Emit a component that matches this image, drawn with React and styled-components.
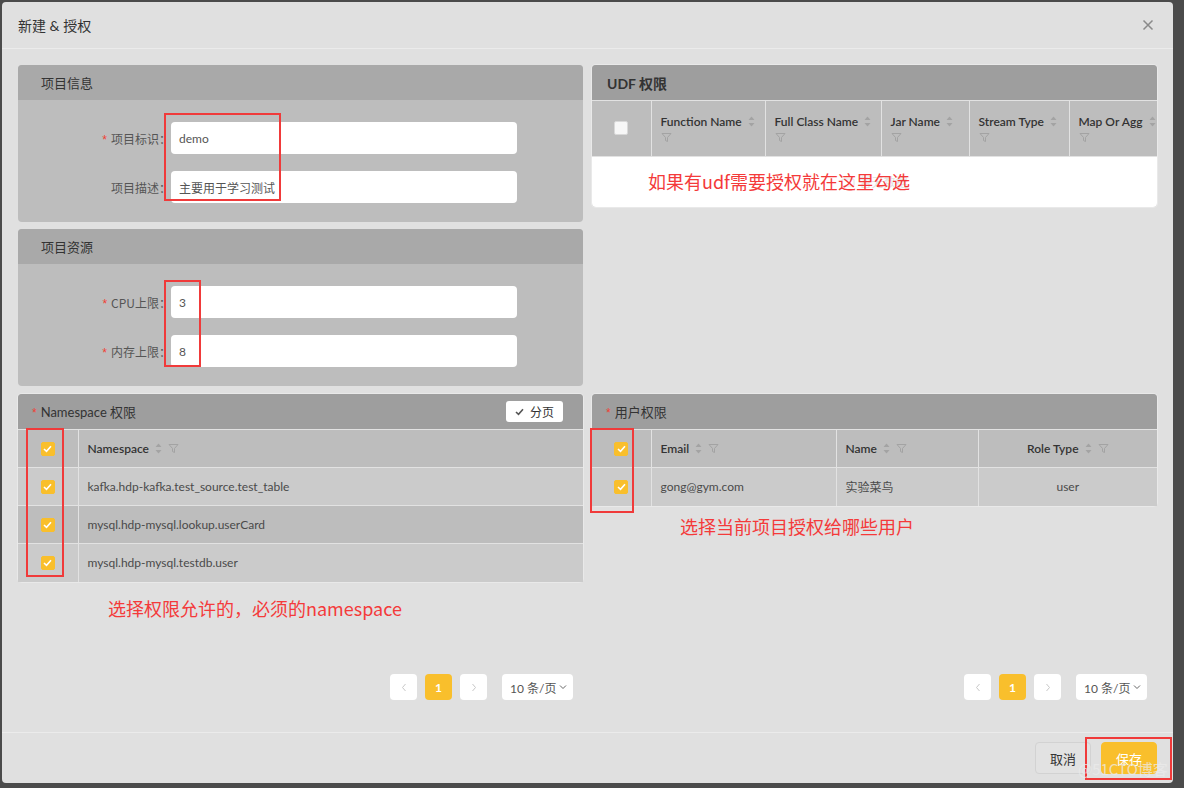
import React from 'react';
import styled, { createGlobalStyle } from 'styled-components';

const GlobalStyle = createGlobalStyle`
  html, body {
    margin: 0;
    padding: 0;
    background: #4b4b4b;
  }
  body {
    font-family: Lato, "Noto Sans CJK SC", sans-serif;
    font-size: 12px;
    color: #444;
  }
`;

const Screen = styled.div`
  position: relative;
  width: 1184px;
  height: 788px;
  padding: 2px 0 0 2px;
  box-sizing: border-box;
  overflow: hidden;
`;

const Dialog = styled.div`
  width: 1171px;
  height: 781px;
  background: #e0e0e0;
  border-radius: 4px;
  display: flex;
  flex-direction: column;
`;

const DialogHeader = styled.div`
  height: 46px;
  flex-shrink: 0;
  display: flex;
  align-items: center;
  justify-content: space-between;
  padding: 0 19px 0 16px;
  border-bottom: 1px solid #ebebeb;
  font-size: 14px;
  color: #333;
`;

const Close = styled.span`
  width: 12px;
  height: 12px;
  display: flex;
  color: #8a8a8a;
`;

const Body = styled.div`
  flex: 1;
  padding: 16px 16px 32px;
  display: grid;
  grid-template-columns: 565px 565px;
  grid-template-rows: auto auto 1fr;
  column-gap: 9px;
  row-gap: 8px;
`;

const Stack = styled.div`
  display: flex;
  flex-direction: column;
  gap: 7px;
  align-self: start;
`;

const Cell = styled.div`
  align-self: start;
`;

const Card = styled.div`
  position: relative;
  background: #bdbdbd;
  border-radius: 4px;
  box-shadow: ${p => (p.$edge ? '0 0 0 1px #e9e9e9' : 'none')};
`;

const CardHeader = styled.div`
  height: 35px;
  display: flex;
  align-items: center;
  justify-content: space-between;
  padding: 0 20px 0 ${p => p.$indent}px;
  background: ${p => p.$bg};
  border-radius: 4px 4px 0 0;
  font-size: ${p => (p.$bold ? 14 : 13)}px;
  font-weight: ${p => (p.$bold ? 700 : 400)};
  color: #333;
`;

const Star = styled.span`
  color: #f04134;
  font-size: 12px;
  margin-right: 4px;
  font-family: "Liberation Sans", sans-serif;
`;

const PageToggle = styled.span`
  display: flex;
  align-items: center;
  gap: 6px;
  height: 21px;
  padding: 0 9px;
  background: #fff;
  border-radius: 3px;
  font-size: 12px;
  color: #333;
`;

const FormBody = styled.div`
  display: flex;
  flex-direction: column;
  gap: 17px;
  padding: 22px 0 19px;
`;

const FormRow = styled.div`
  display: flex;
  align-items: center;
`;

const Label = styled.label`
  width: 153px;
  text-align: right;
  color: #555;
  font-size: 12px;
  font-family: "Noto Sans CJK SC", sans-serif;
`;

const Input = styled.div`
  width: 346px;
  height: 32px;
  box-sizing: border-box;
  display: flex;
  align-items: center;
  padding: 0 8px;
  background: #fff;
  border-radius: 4px;
  color: #555;
  font-size: 12px;
`;

const Mark = styled.div`
  position: absolute;
  border: 2px solid #f03a3a;
  pointer-events: none;
  left: ${p => p.$x}px;
  top: ${p => p.$y}px;
  width: ${p => p.$w}px;
  height: ${p => p.$h}px;
  box-sizing: border-box;
`;

const Table = styled.table`
  width: 100%;
  border-collapse: collapse;
  table-layout: fixed;
`;

const Th = styled.th`
  height: ${p => p.$h}px;
  padding: 0 9px;
  background: #bdbdbd;
  border-right: 1px solid #e2e2e2;
  border-top: 1px solid #e2e2e2;
  font-weight: 600;
  font-size: 12px;
  color: #333;
  text-align: ${p => p.$align || 'left'};
  vertical-align: middle;
  box-sizing: border-box;
  overflow: hidden;
  &:last-child { border-right: none; }
`;

const Td = styled.td`
  height: 38px;
  padding: 0 9px;
  background: ${p => (p.$alt ? '#bdbdbd' : '#cbcbcb')};
  border-right: 1px solid #e2e2e2;
  border-top: 1px solid #e2e2e2;
  color: #4a4a4a;
  font-size: 12px;
  text-align: ${p => p.$align || 'left'};
  box-sizing: border-box;
  &:last-child { border-right: none; }
`;

const HeadLine = styled.span`
  display: inline-flex;
  align-items: center;
  gap: 6px;
  white-space: nowrap;
`;

const IconLine = styled.div`
  display: flex;
  margin-top: 3px;
`;

const Box = styled.span`
  display: inline-flex;
  align-items: center;
  justify-content: center;
  width: 14px;
  height: 14px;
  border-radius: 2px;
  box-sizing: border-box;
  background: ${p => (p.$on ? '#f9bf2c' : '#f7f7f7')};
  border: 1px solid ${p => (p.$on ? '#f9bf2c' : '#d9d9d9')};
  vertical-align: middle;
`;

const CheckCell = styled.div`
  display: flex;
  justify-content: center;
`;

const Empty = styled.div`
  position: relative;
  height: 50px;
  background: #fff;
  border-top: 1px solid #e2e2e2;
  border-radius: 0 0 4px 4px;
  display: flex;
  align-items: center;
  justify-content: center;
  gap: 4px;
  color: #e2e2e2;
  font-size: 12px;
`;

const Note = styled.div`
  color: #f43a3a;
  font-size: 18px;
  font-family: "Noto Sans CJK SC", sans-serif;
  line-height: 22px;
  white-space: nowrap;
  padding-left: ${p => p.$indent}px;
  margin-top: ${p => p.$top}px;
`;

const FloatNote = styled(Note)`
  position: absolute;
  left: 56px;
  top: 13px;
  margin: 0;
  padding: 0;
`;

const Pager = styled.div`
  align-self: end;
  justify-self: end;
  margin-right: 10px;
  display: flex;
  align-items: center;
  gap: 8px;
`;

const PageItem = styled.span`
  width: 27px;
  height: 26px;
  display: flex;
  align-items: center;
  justify-content: center;
  border-radius: 4px;
  background: ${p => (p.$active ? '#f9bf2c' : '#fff')};
  color: ${p => (p.$active ? '#fff' : '#c8c8c8')};
  font-weight: ${p => (p.$active ? 700 : 400)};
  font-size: 12px;
`;

const SizeSelect = styled.span`
  margin-left: 7px;
  width: 71px;
  height: 26px;
  box-sizing: border-box;
  padding-left: 8px;
  display: flex;
  align-items: center;
  gap: 3px;
  background: #fff;
  border-radius: 4px;
  color: #555;
  font-size: 12px;
`;

const Footer = styled.div`
  height: 51px;
  flex-shrink: 0;
  box-sizing: border-box;
  border-top: 1px solid #ebebeb;
  display: flex;
  align-items: center;
  justify-content: flex-end;
  gap: 10px;
  padding: 0 16px;
`;

const Button = styled.span`
  position: relative;
  height: 32px;
  padding: 0 14px;
  box-sizing: border-box;
  display: flex;
  align-items: center;
  border-radius: 4px;
  font-size: 13px;
  background: ${p => (p.$primary ? '#f9bf2c' : '#e2e2e2')};
  border: 1px solid ${p => (p.$primary ? '#f9bf2c' : '#d2d2d2')};
  color: ${p => (p.$primary ? '#fff' : '#333')};
`;

const SaveMark = styled.span`
  position: absolute;
  top: -6px;
  left: -17px;
  right: -16px;
  bottom: -7px;
  border: 2px solid #f03a3a;
`;

const Watermark = styled.div`
  position: absolute;
  left: 1078px;
  top: 758px;
  font-size: 15px;
  color: rgba(235, 235, 235, 0.75);
  font-family: "Noto Sans CJK SC", sans-serif;
  white-space: nowrap;
`;

const Caret = () => (
  <svg width="7" height="11" viewBox="0 0 7 11">
    <path d="M3.5 0.5 L6.5 4 H0.5 Z M0.5 7 H6.5 L3.5 10.5 Z" fill="#a3a3a3" />
  </svg>
);

const Funnel = () => (
  <svg width="11" height="11" viewBox="0 0 11 11">
    <path d="M1 1.5 H10 L6.5 5.5 V9.5 L4.5 8.5 V5.5 Z" fill="none" stroke="#a3a3a3" strokeWidth="1" strokeLinejoin="round" />
  </svg>
);

const Tick = ({ color = '#fff' }) => (
  <svg width="9" height="8" viewBox="0 0 9 8">
    <path d="M1 4 L3.5 6.3 L8 1.3" fill="none" stroke={color} strokeWidth="1.6" />
  </svg>
);

const Chevron = ({ dir }) => (
  <svg width="6" height="9" viewBox="0 0 6 9">
    <path d={dir === 'left' ? 'M4.5 1 L1.5 4.5 L4.5 8' : 'M1.5 1 L4.5 4.5 L1.5 8'} fill="none" stroke="#c8c8c8" strokeWidth="1" />
  </svg>
);

const Check = ({ on }) => (
  <CheckCell>
    <Box $on={on}>{on && <Tick />}</Box>
  </CheckCell>
);

const Head = ({ title, wrap }) => (
  wrap ? (
    <>
      <HeadLine>{title}<Caret /></HeadLine>
      <IconLine><Funnel /></IconLine>
    </>
  ) : (
    <HeadLine>{title}<Caret /><Funnel /></HeadLine>
  )
);

const Pagination = () => (
  <Pager>
    <PageItem><Chevron dir="left" /></PageItem>
    <PageItem $active>1</PageItem>
    <PageItem><Chevron dir="right" /></PageItem>
    <SizeSelect>
      10 条/页
      <svg width="8" height="6" viewBox="0 0 8 6">
        <path d="M1 1.5 L4 4.5 L7 1.5" fill="none" stroke="#666" strokeWidth="1" />
      </svg>
    </SizeSelect>
  </Pager>
);

const udfCols = [
  ['Function Name', 114],
  ['Full Class Name', 116],
  ['Jar Name', 88],
  ['Stream Type', 100],
  ['Map Or Agg', 88],
];

const namespaces = [
  'kafka.hdp-kafka.test_source.test_table',
  'mysql.hdp-mysql.lookup.userCard',
  'mysql.hdp-mysql.testdb.user',
];

export default function App() {
  return (
    <Screen>
      <GlobalStyle />
      <Dialog>
        <DialogHeader>
          新建 &amp; 授权
          <Close>
            <svg width="12" height="12" viewBox="0 0 12 12">
              <path d="M1.5 1.5 L10.5 10.5 M10.5 1.5 L1.5 10.5" stroke="currentColor" strokeWidth="1.5" />
            </svg>
          </Close>
        </DialogHeader>

        <Body>
          <Stack>
            <Card>
              <CardHeader $bg="#a9a9a9" $indent={23}>项目信息</CardHeader>
              <FormBody>
                <FormRow>
                  <Label><Star>*</Star>项目标识：</Label>
                  <Input>demo</Input>
                </FormRow>
                <FormRow>
                  <Label>项目描述：</Label>
                  <Input>主要用于学习测试</Input>
                </FormRow>
              </FormBody>
              <Mark $x={146} $y={48} $w={117} $h={88} />
            </Card>
            <Card>
              <CardHeader $bg="#a9a9a9" $indent={23}>项目资源</CardHeader>
              <FormBody>
                <FormRow>
                  <Label><Star>*</Star>CPU上限：</Label>
                  <Input>3</Input>
                </FormRow>
                <FormRow>
                  <Label><Star>*</Star>内存上限：</Label>
                  <Input>8</Input>
                </FormRow>
              </FormBody>
              <Mark $x={146} $y={51} $w={37} $h={87} />
            </Card>
          </Stack>

          <Cell>
            <Card $edge>
              <CardHeader $bg="#9e9e9e" $indent={15} $bold>UDF 权限</CardHeader>
              <Table>
                <colgroup>
                  <col style={{ width: 59 }} />
                  {udfCols.map(([name, w]) => <col key={name} style={{ width: w }} />)}
                </colgroup>
                <thead>
                  <tr>
                    <Th $h={55}><Check /></Th>
                    {udfCols.map(([name]) => (
                      <Th key={name} $h={55}><Head title={name} wrap /></Th>
                    ))}
                  </tr>
                </thead>
              </Table>
              <Empty>
                <svg width="14" height="10" viewBox="0 0 14 10">
                  <rect x="1" y="2" width="12" height="7" rx="1" fill="none" stroke="#e2e2e2" />
                </svg>
                暂无数据
                <FloatNote>如果有udf需要授权就在这里勾选</FloatNote>
              </Empty>
            </Card>
          </Cell>

          <Cell>
            <Card $edge>
              <CardHeader $bg="#9e9e9e" $indent={14}>
                <span><Star>*</Star>Namespace 权限</span>
                <PageToggle><Tick color="#555" />分页</PageToggle>
              </CardHeader>
              <Table>
                <colgroup>
                  <col style={{ width: 60 }} />
                  <col />
                </colgroup>
                <thead>
                  <tr>
                    <Th $h={38}><Check on /></Th>
                    <Th $h={38}><Head title="Namespace" /></Th>
                  </tr>
                </thead>
                <tbody>
                  {namespaces.map((ns, i) => (
                    <tr key={ns}>
                      <Td $alt={i % 2 === 1}><Check on /></Td>
                      <Td $alt={i % 2 === 1}>{ns}</Td>
                    </tr>
                  ))}
                </tbody>
              </Table>
              <Mark $x={8} $y={34} $w={38} $h={149} />
            </Card>
            <Note $indent={90} $top={15}>选择权限允许的，必须的namespace</Note>
          </Cell>

          <Cell>
            <Card $edge>
              <CardHeader $bg="#9e9e9e" $indent={14}>
                <span><Star>*</Star>用户权限</span>
              </CardHeader>
              <Table>
                <colgroup>
                  <col style={{ width: 59 }} />
                  <col style={{ width: 185 }} />
                  <col style={{ width: 142 }} />
                  <col />
                </colgroup>
                <thead>
                  <tr>
                    <Th $h={38}><Check on /></Th>
                    <Th $h={38}><Head title="Email" /></Th>
                    <Th $h={38}><Head title="Name" /></Th>
                    <Th $h={38} $align="center"><Head title="Role Type" /></Th>
                  </tr>
                </thead>
                <tbody>
                  <tr>
                    <Td><Check on /></Td>
                    <Td>gong@gym.com</Td>
                    <Td>实验菜鸟</Td>
                    <Td $align="center">user</Td>
                  </tr>
                </tbody>
              </Table>
              <Mark $x={-2} $y={34} $w={44} $h={85} />
            </Card>
            <Note $indent={88} $top={9}>选择当前项目授权给哪些用户</Note>
          </Cell>

          <Pagination />
          <Pagination />
        </Body>

        <Footer>
          <Button>取消</Button>
          <Button $primary>
            保存
            <SaveMark />
          </Button>
        </Footer>
      </Dialog>
      <Watermark>@51CTO博客</Watermark>
    </Screen>
  );
}
